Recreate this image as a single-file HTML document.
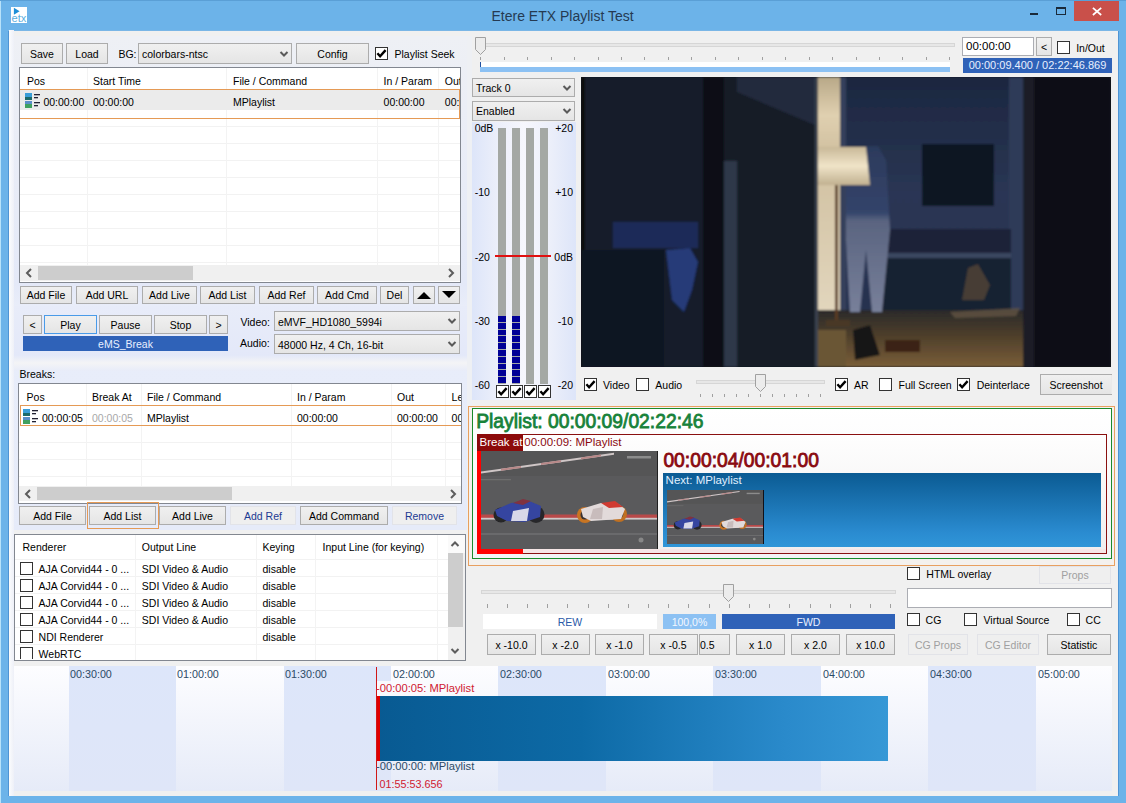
<!DOCTYPE html>
<html><head><meta charset="utf-8"><style>
html,body{margin:0;padding:0;width:1126px;height:803px;overflow:hidden;background:#6cb3e9}
body{position:relative;font-family:"Liberation Sans",sans-serif}
div,span,svg{position:absolute}
.a{position:absolute;overflow:visible}
.t{position:absolute;white-space:nowrap;font-family:"Liberation Sans",sans-serif}
.btn{border:1px solid #acacac;box-sizing:border-box;background:linear-gradient(#f0f0f0,#e5e5e5)}
.btnb{border:1px solid #4a9be8;box-sizing:border-box;background:linear-gradient(#f0f0f0,#e5e5e5)}
.flat{border:1px solid #e2e3e8;box-sizing:border-box;background:#efefef}
.chk{width:13px;height:13px;border:1px solid #333;box-sizing:border-box;background:#fff}
</style></head><body>
<div style="left:0;top:0;width:1126px;height:803px;background:#6cb3e9"></div>
<div style="left:0px;top:0px;width:1126px;height:1px;background:#5a9fd6"></div>
<div style="left:0px;top:1px;width:1px;height:802px;background:#b8e2fa"></div>
<div style="left:11px;top:7px;width:16px;height:16px;background:#fff"></div>
<svg class="a" style="left:11px;top:7px" width="16" height="16" viewBox="0 0 16 16"><path d="M2.9 0.8 L8.6 4.3 L2.9 7.8 Z" fill="#1e8fd8"/><text x="0.6" y="15" font-family="Liberation Sans" font-size="10" textLength="14.8" lengthAdjust="spacingAndGlyphs" fill="#5aaee0">etx</text></svg>
<span class="t" style="left:491.5px;top:8.95px;font-size:14px;line-height:14px;color:#253a52;font-weight:normal;">Etere ETX Playlist Test</span>
<div style="left:1030px;top:13px;width:8px;height:2px;background:#1a2a3a"></div>
<div style="left:1056px;top:7px;width:10px;height:8px;border:1px solid #1a2a3a;border-top-width:2px;box-sizing:border-box"></div>
<div style="left:1074px;top:1px;width:45px;height:20px;background:#c9504a"></div>
<svg class="a" style="left:1090px;top:5px" width="14" height="12" viewBox="0 0 14 12"><path d="M2.9 2.8 L11.2 10 M11.2 2.8 L2.9 10" stroke="#fff" stroke-width="1.7"/></svg>
<div style="left:8px;top:30px;width:1111px;height:766px;background:#4f94d4"></div>
<div style="left:9px;top:30px;width:1109px;height:766px;background:#f0f0f0"></div>
<div style="left:8px;top:30px;width:1111px;height:1px;background:#7ab6e6"></div>
<div style="left:9px;top:30px;width:5px;height:766px;background:linear-gradient(90deg,#fbfcfd,#eef0f8)"></div>
<div style="left:14px;top:36px;width:453px;height:248px;background:linear-gradient(#eef0f5,#e4e9f8)"></div>
<div style="left:14px;top:284px;width:453px;height:22px;background:linear-gradient(#e4e9f8,#e9edf9)"></div>
<div style="left:14px;top:306px;width:453px;height:56px;background:linear-gradient(#e8ecf9,#e3e8f9)"></div>
<div style="left:14px;top:362px;width:453px;height:168px;background:linear-gradient(#e8edfa,#e6ebf9)"></div>
<div style="left:14px;top:355px;width:453px;height:16px;background:linear-gradient(#e3e8f9,#f4f4f6 50%,#e8ecf9)"></div>
<div style="left:467px;top:36px;width:5px;height:370px;background:#eef0f4"></div>
<div class="btn" style="left:21px;top:43px;width:42px;height:21px;"></div>
<span class="t" style="left:21px;width:42px;text-align:center;top:48.61px;font-size:10.5px;line-height:10.5px;color:#000;font-weight:normal;">Save</span>
<div class="btn" style="left:66px;top:43px;width:42px;height:21px;"></div>
<span class="t" style="left:66px;width:42px;text-align:center;top:48.61px;font-size:10.5px;line-height:10.5px;color:#000;font-weight:normal;">Load</span>
<span class="t" style="left:118.4px;top:48.61px;font-size:10.5px;line-height:10.5px;color:#000;font-weight:normal;">BG:</span>
<div class="btn" style="left:138px;top:43px;width:154px;height:21px;"></div>
<span class="t" style="left:142px;top:48.61px;font-size:10.5px;line-height:10.5px;color:#000;font-weight:normal;">colorbars-ntsc</span>
<svg class="a" style="left:279px;top:49.5px" width="10" height="8" viewBox="0 0 10 8"><path d="M1.5 2 L5 5.5 L8.5 2" fill="none" stroke="#5a5a5a" stroke-width="2"/></svg>
<div class="btn" style="left:296px;top:43px;width:73px;height:21px;"></div>
<span class="t" style="left:296px;width:73px;text-align:center;top:48.61px;font-size:10.5px;line-height:10.5px;color:#000;font-weight:normal;">Config</span>
<div class="chk" style="left:375px;top:47px;"></div>
<svg class="a" style="left:375px;top:47px" width="13" height="13" viewBox="0 0 13 13"><path d="M2.4 6.3 L5.1 9.3 L10.6 3.1" fill="none" stroke="#000" stroke-width="2.4"/></svg>
<span class="t" style="left:394.5px;top:48.61px;font-size:10.5px;line-height:10.5px;color:#000;font-weight:normal;">Playlist Seek</span>
<div style="left:19px;top:67px;width:442px;height:216px;background:#fff;border:1px solid #828790;box-sizing:border-box"></div>
<div style="left:20px;top:109px;width:440px;height:1px;background:#f2f2f2"></div>
<div style="left:20px;top:126px;width:440px;height:1px;background:#f2f2f2"></div>
<div style="left:20px;top:143px;width:440px;height:1px;background:#f2f2f2"></div>
<div style="left:20px;top:160px;width:440px;height:1px;background:#f2f2f2"></div>
<div style="left:20px;top:177px;width:440px;height:1px;background:#f2f2f2"></div>
<div style="left:20px;top:194px;width:440px;height:1px;background:#f2f2f2"></div>
<div style="left:20px;top:211px;width:440px;height:1px;background:#f2f2f2"></div>
<div style="left:20px;top:228px;width:440px;height:1px;background:#f2f2f2"></div>
<div style="left:20px;top:245px;width:440px;height:1px;background:#f2f2f2"></div>
<div style="left:20px;top:262px;width:440px;height:1px;background:#f2f2f2"></div>
<div style="left:87px;top:68px;width:1px;height:197px;background:#f3f3f3"></div>
<div style="left:226px;top:68px;width:1px;height:197px;background:#f3f3f3"></div>
<div style="left:377px;top:68px;width:1px;height:197px;background:#f3f3f3"></div>
<div style="left:438px;top:68px;width:1px;height:197px;background:#f3f3f3"></div>
<div style="left:0;top:0;width:1126px;height:803px;clip-path:inset(68px 666px 521px 20px)">
<span class="t" style="left:27px;top:76.11px;font-size:10.5px;line-height:10.5px;color:#000;font-weight:normal;">Pos</span>
<span class="t" style="left:93px;top:76.11px;font-size:10.5px;line-height:10.5px;color:#000;font-weight:normal;">Start Time</span>
<span class="t" style="left:233px;top:76.11px;font-size:10.5px;line-height:10.5px;color:#000;font-weight:normal;">File / Command</span>
<span class="t" style="left:383.6px;top:76.11px;font-size:10.5px;line-height:10.5px;color:#000;font-weight:normal;">In / Param</span>
<span class="t" style="left:444.8px;top:76.11px;font-size:10.5px;line-height:10.5px;color:#000;font-weight:normal;">Out</span>
<div style="left:20px;top:90px;width:440px;height:20px;background:#ebebeb"></div>
<div style="left:19px;top:89px;width:441px;height:30px;border:1px solid #e59a55;box-sizing:border-box"></div>
<svg class="a" style="left:25px;top:93px" width="16" height="16" viewBox="0 0 16 16"><rect x="0" y="0" width="7" height="7" fill="#3a9ed8"/><rect x="0" y="4" width="7" height="3" fill="#1c6a6a"/><rect x="0" y="8" width="7" height="7" fill="#5a8ec8"/><rect x="0" y="11" width="7" height="4" fill="#40a060"/><rect x="9" y="1" width="6" height="1.3" fill="#223"/><rect x="9" y="4" width="4" height="1.3" fill="#223"/><rect x="9" y="9" width="6" height="1.3" fill="#223"/><rect x="9" y="12" width="4" height="1.3" fill="#223"/></svg>
<span class="t" style="left:43.4px;top:97.11px;font-size:10.5px;line-height:10.5px;color:#000;font-weight:normal;">00:00:00</span>
<span class="t" style="left:93px;top:97.11px;font-size:10.5px;line-height:10.5px;color:#000;font-weight:normal;">00:00:00</span>
<span class="t" style="left:233px;top:97.11px;font-size:10.5px;line-height:10.5px;color:#000;font-weight:normal;">MPlaylist</span>
<span class="t" style="left:383.6px;top:97.11px;font-size:10.5px;line-height:10.5px;color:#000;font-weight:normal;">00:00:00</span>
<span class="t" style="left:444.8px;top:97.11px;font-size:10.5px;line-height:10.5px;color:#000;font-weight:normal;">00:</span>
</div>
<div style="left:20px;top:265px;width:440px;height:16px;background:#f0f0f0"></div>
<div style="left:38px;top:266px;width:155px;height:14px;background:#cdcdcd"></div>
<svg class="a" style="left:25px;top:268px" width="8" height="10" viewBox="0 0 8 10"><path d="M6 1 L2 5 L6 9" fill="none" stroke="#5d5d5d" stroke-width="2"/></svg>
<svg class="a" style="left:447px;top:268px" width="8" height="10" viewBox="0 0 8 10"><path d="M2 1 L6 5 L2 9" fill="none" stroke="#5d5d5d" stroke-width="2"/></svg>
<div class="btn" style="left:20px;top:286px;width:52px;height:18px;"></div>
<span class="t" style="left:20px;width:52px;text-align:center;top:290.11px;font-size:10.5px;line-height:10.5px;color:#000;font-weight:normal;">Add File</span>
<div class="btn" style="left:76px;top:286px;width:62px;height:18px;"></div>
<span class="t" style="left:76px;width:62px;text-align:center;top:290.11px;font-size:10.5px;line-height:10.5px;color:#000;font-weight:normal;">Add URL</span>
<div class="btn" style="left:142px;top:286px;width:55px;height:18px;"></div>
<span class="t" style="left:142px;width:55px;text-align:center;top:290.11px;font-size:10.5px;line-height:10.5px;color:#000;font-weight:normal;">Add Live</span>
<div class="btn" style="left:200px;top:286px;width:55px;height:18px;"></div>
<span class="t" style="left:200px;width:55px;text-align:center;top:290.11px;font-size:10.5px;line-height:10.5px;color:#000;font-weight:normal;">Add List</span>
<div class="btn" style="left:259px;top:286px;width:55px;height:18px;"></div>
<span class="t" style="left:259px;width:55px;text-align:center;top:290.11px;font-size:10.5px;line-height:10.5px;color:#000;font-weight:normal;">Add Ref</span>
<div class="btn" style="left:317px;top:286px;width:60px;height:18px;"></div>
<span class="t" style="left:317px;width:60px;text-align:center;top:290.11px;font-size:10.5px;line-height:10.5px;color:#000;font-weight:normal;">Add Cmd</span>
<div class="btn" style="left:380px;top:286px;width:29px;height:18px;"></div>
<span class="t" style="left:380px;width:29px;text-align:center;top:290.11px;font-size:10.5px;line-height:10.5px;color:#000;font-weight:normal;">Del</span>
<div class="btn" style="left:413px;top:286px;width:22px;height:18px;"></div>
<span class="t" style="left:413px;width:22px;text-align:center;top:290.11px;font-size:10.5px;line-height:10.5px;color:#000;font-weight:normal;"></span>
<div class="btn" style="left:438px;top:286px;width:22px;height:18px;"></div>
<span class="t" style="left:438px;width:22px;text-align:center;top:290.11px;font-size:10.5px;line-height:10.5px;color:#000;font-weight:normal;"></span>
<svg class="a" style="left:416px;top:290px" width="16" height="10" viewBox="0 0 16 10"><path d="M1 9 L8 2 L15 9 Z" fill="#000"/></svg>
<svg class="a" style="left:441px;top:290px" width="16" height="10" viewBox="0 0 16 10"><path d="M1 1 L8 8 L15 1 Z" fill="#000"/></svg>
<div class="btn" style="left:23px;top:315px;width:19px;height:19px;"></div>
<span class="t" style="left:23px;width:19px;text-align:center;top:320.11px;font-size:10.5px;line-height:10.5px;color:#000;font-weight:normal;">&lt;</span>
<div class="btnb" style="left:44px;top:315px;width:53px;height:19px;"></div>
<span class="t" style="left:44px;width:53px;text-align:center;top:320.11px;font-size:10.5px;line-height:10.5px;color:#000;font-weight:normal;">Play</span>
<div class="btn" style="left:99px;top:315px;width:53px;height:19px;"></div>
<span class="t" style="left:99px;width:53px;text-align:center;top:320.11px;font-size:10.5px;line-height:10.5px;color:#000;font-weight:normal;">Pause</span>
<div class="btn" style="left:154px;top:315px;width:53px;height:19px;"></div>
<span class="t" style="left:154px;width:53px;text-align:center;top:320.11px;font-size:10.5px;line-height:10.5px;color:#000;font-weight:normal;">Stop</span>
<div class="btn" style="left:209px;top:315px;width:19px;height:19px;"></div>
<span class="t" style="left:209px;width:19px;text-align:center;top:320.11px;font-size:10.5px;line-height:10.5px;color:#000;font-weight:normal;">&gt;</span>
<div style="left:23px;top:336px;width:205px;height:15px;background:#2f62b8"></div>
<span class="t" style="left:23px;width:205px;text-align:center;top:338.61px;font-size:10.5px;line-height:10.5px;color:#e8f0ff;font-weight:normal;">eMS_Break</span>
<span class="t" style="left:240.4px;top:317.11px;font-size:10.5px;line-height:10.5px;color:#000;font-weight:normal;">Video:</span>
<div class="btn" style="left:274px;top:311px;width:186px;height:20px;"></div>
<span class="t" style="left:278px;top:317.11px;font-size:10.5px;line-height:10.5px;color:#000;font-weight:normal;">eMVF_HD1080_5994i</span>
<svg class="a" style="left:447px;top:317.0px" width="10" height="8" viewBox="0 0 10 8"><path d="M1.5 2 L5 5.5 L8.5 2" fill="none" stroke="#5a5a5a" stroke-width="2"/></svg>
<span class="t" style="left:240px;top:338.11px;font-size:10.5px;line-height:10.5px;color:#000;font-weight:normal;">Audio:</span>
<div class="btn" style="left:274px;top:334px;width:186px;height:20px;"></div>
<span class="t" style="left:278px;top:340.11px;font-size:10.5px;line-height:10.5px;color:#000;font-weight:normal;">48000 Hz, 4 Ch, 16-bit</span>
<svg class="a" style="left:447px;top:340.0px" width="10" height="8" viewBox="0 0 10 8"><path d="M1.5 2 L5 5.5 L8.5 2" fill="none" stroke="#5a5a5a" stroke-width="2"/></svg>
<span class="t" style="left:19.5px;top:368.71px;font-size:10.5px;line-height:10.5px;color:#000;font-weight:normal;">Breaks:</span>
<div style="left:18px;top:383px;width:444px;height:121px;background:#fff;border:1px solid #828790;box-sizing:border-box"></div>
<div style="left:19px;top:442px;width:442px;height:1px;background:#f2f2f2"></div>
<div style="left:19px;top:459px;width:442px;height:1px;background:#f2f2f2"></div>
<div style="left:19px;top:476px;width:442px;height:1px;background:#f2f2f2"></div>
<div style="left:86px;top:384px;width:1px;height:102px;background:#f3f3f3"></div>
<div style="left:141px;top:384px;width:1px;height:102px;background:#f3f3f3"></div>
<div style="left:291px;top:384px;width:1px;height:102px;background:#f3f3f3"></div>
<div style="left:391px;top:384px;width:1px;height:102px;background:#f3f3f3"></div>
<div style="left:445px;top:384px;width:1px;height:102px;background:#f3f3f3"></div>
<div style="left:0;top:0;width:1126px;height:803px;clip-path:inset(384px 665px 300px 19px)">
<span class="t" style="left:26.6px;top:391.71px;font-size:10.5px;line-height:10.5px;color:#000;font-weight:normal;">Pos</span>
<span class="t" style="left:92px;top:391.71px;font-size:10.5px;line-height:10.5px;color:#000;font-weight:normal;">Break At</span>
<span class="t" style="left:147px;top:391.71px;font-size:10.5px;line-height:10.5px;color:#000;font-weight:normal;">File / Command</span>
<span class="t" style="left:297px;top:391.71px;font-size:10.5px;line-height:10.5px;color:#000;font-weight:normal;">In / Param</span>
<span class="t" style="left:397px;top:391.71px;font-size:10.5px;line-height:10.5px;color:#000;font-weight:normal;">Out</span>
<span class="t" style="left:451.6px;top:391.71px;font-size:10.5px;line-height:10.5px;color:#000;font-weight:normal;">Le</span>
<div style="left:20px;top:405px;width:442px;height:21px;border:1px solid #e59a55;box-sizing:border-box"></div>
<svg class="a" style="left:23px;top:409px" width="16" height="16" viewBox="0 0 16 16"><rect x="0" y="0" width="7" height="7" fill="#3a9ed8"/><rect x="0" y="4" width="7" height="3" fill="#1c6a6a"/><rect x="0" y="8" width="7" height="7" fill="#5a8ec8"/><rect x="0" y="11" width="7" height="4" fill="#40a060"/><rect x="9" y="1" width="6" height="1.3" fill="#223"/><rect x="9" y="4" width="4" height="1.3" fill="#223"/><rect x="9" y="9" width="6" height="1.3" fill="#223"/><rect x="9" y="12" width="4" height="1.3" fill="#223"/></svg>
<span class="t" style="left:42px;top:412.81px;font-size:10.5px;line-height:10.5px;color:#000;font-weight:normal;">00:00:05</span>
<span class="t" style="left:92px;top:412.81px;font-size:10.5px;line-height:10.5px;color:#a8a8a8;font-weight:normal;">00:00:05</span>
<span class="t" style="left:147px;top:412.81px;font-size:10.5px;line-height:10.5px;color:#000;font-weight:normal;">MPlaylist</span>
<span class="t" style="left:297px;top:412.81px;font-size:10.5px;line-height:10.5px;color:#000;font-weight:normal;">00:00:00</span>
<span class="t" style="left:397px;top:412.81px;font-size:10.5px;line-height:10.5px;color:#000;font-weight:normal;">00:00:00</span>
<span class="t" style="left:451.6px;top:412.81px;font-size:10.5px;line-height:10.5px;color:#000;font-weight:normal;">00</span>
</div>
<div style="left:19px;top:486px;width:442px;height:15px;background:#f0f0f0"></div>
<div style="left:37px;top:487px;width:195px;height:13px;background:#cdcdcd"></div>
<svg class="a" style="left:24px;top:489px" width="8" height="10" viewBox="0 0 8 10"><path d="M6 1 L2 5 L6 9" fill="none" stroke="#5d5d5d" stroke-width="2"/></svg>
<svg class="a" style="left:449px;top:489px" width="8" height="10" viewBox="0 0 8 10"><path d="M2 1 L6 5 L2 9" fill="none" stroke="#5d5d5d" stroke-width="2"/></svg>
<div class="btn" style="left:19px;top:506px;width:67px;height:19px;"></div>
<span class="t" style="left:19px;width:67px;text-align:center;top:510.61px;font-size:10.5px;line-height:10.5px;color:#000;font-weight:normal;">Add File</span>
<div style="left:87px;top:502px;width:72px;height:27px;border:1px solid #e59a55;box-sizing:border-box"></div>
<div class="btn" style="left:89px;top:506px;width:67px;height:19px;"></div>
<span class="t" style="left:89px;width:67px;text-align:center;top:510.61px;font-size:10.5px;line-height:10.5px;color:#000;font-weight:normal;">Add List</span>
<div class="btn" style="left:159px;top:506px;width:67px;height:19px;"></div>
<span class="t" style="left:159px;width:67px;text-align:center;top:510.61px;font-size:10.5px;line-height:10.5px;color:#000;font-weight:normal;">Add Live</span>
<div class="flat" style="left:230px;top:506px;width:66px;height:19px"></div>
<span class="t" style="left:230px;width:66px;text-align:center;top:510.61px;font-size:10.5px;line-height:10.5px;color:#1c3a92;font-weight:normal;">Add Ref</span>
<div class="btn" style="left:300px;top:506px;width:88px;height:19px;"></div>
<span class="t" style="left:300px;width:88px;text-align:center;top:510.61px;font-size:10.5px;line-height:10.5px;color:#000;font-weight:normal;">Add Command</span>
<div class="flat" style="left:392px;top:506px;width:65px;height:19px"></div>
<span class="t" style="left:392px;width:65px;text-align:center;top:510.61px;font-size:10.5px;line-height:10.5px;color:#1c3a92;font-weight:normal;">Remove</span>
<div style="left:14px;top:534px;width:452px;height:127px;background:#fff;border:1px solid #828790;box-sizing:border-box"></div>
<div style="left:15px;top:559px;width:433px;height:1px;background:#f2f2f2"></div>
<div style="left:15px;top:576px;width:433px;height:1px;background:#f2f2f2"></div>
<div style="left:15px;top:593px;width:433px;height:1px;background:#f2f2f2"></div>
<div style="left:15px;top:610px;width:433px;height:1px;background:#f2f2f2"></div>
<div style="left:15px;top:627px;width:433px;height:1px;background:#f2f2f2"></div>
<div style="left:15px;top:644px;width:433px;height:1px;background:#f2f2f2"></div>
<div style="left:135px;top:535px;width:1px;height:125px;background:#f3f3f3"></div>
<div style="left:256px;top:535px;width:1px;height:125px;background:#f3f3f3"></div>
<div style="left:315px;top:535px;width:1px;height:125px;background:#f3f3f3"></div>
<div style="left:437px;top:535px;width:1px;height:125px;background:#f3f3f3"></div>
<div style="left:0;top:0;width:1126px;height:803px;clip-path:inset(535px 678px 144px 15px)">
<span class="t" style="left:22.5px;top:542.41px;font-size:10.5px;line-height:10.5px;color:#000;font-weight:normal;">Renderer</span>
<span class="t" style="left:141.8px;top:542.41px;font-size:10.5px;line-height:10.5px;color:#000;font-weight:normal;">Output Line</span>
<span class="t" style="left:262.5px;top:542.41px;font-size:10.5px;line-height:10.5px;color:#000;font-weight:normal;">Keying</span>
<span class="t" style="left:322.6px;top:542.41px;font-size:10.5px;line-height:10.5px;color:#000;font-weight:normal;">Input Line (for keying)</span>
<div class="chk" style="left:20px;top:562px;"></div>
<span class="t" style="left:38.6px;top:563.71px;font-size:10.5px;line-height:10.5px;color:#000;font-weight:normal;">AJA Corvid44 - 0 ...</span>
<span class="t" style="left:141.8px;top:563.71px;font-size:10.5px;line-height:10.5px;color:#000;font-weight:normal;">SDI Video &amp; Audio</span>
<span class="t" style="left:262.5px;top:563.71px;font-size:10.5px;line-height:10.5px;color:#000;font-weight:normal;">disable</span>
<div class="chk" style="left:20px;top:579px;"></div>
<span class="t" style="left:38.6px;top:580.71px;font-size:10.5px;line-height:10.5px;color:#000;font-weight:normal;">AJA Corvid44 - 0 ...</span>
<span class="t" style="left:141.8px;top:580.71px;font-size:10.5px;line-height:10.5px;color:#000;font-weight:normal;">SDI Video &amp; Audio</span>
<span class="t" style="left:262.5px;top:580.71px;font-size:10.5px;line-height:10.5px;color:#000;font-weight:normal;">disable</span>
<div class="chk" style="left:20px;top:596px;"></div>
<span class="t" style="left:38.6px;top:597.71px;font-size:10.5px;line-height:10.5px;color:#000;font-weight:normal;">AJA Corvid44 - 0 ...</span>
<span class="t" style="left:141.8px;top:597.71px;font-size:10.5px;line-height:10.5px;color:#000;font-weight:normal;">SDI Video &amp; Audio</span>
<span class="t" style="left:262.5px;top:597.71px;font-size:10.5px;line-height:10.5px;color:#000;font-weight:normal;">disable</span>
<div class="chk" style="left:20px;top:613px;"></div>
<span class="t" style="left:38.6px;top:614.71px;font-size:10.5px;line-height:10.5px;color:#000;font-weight:normal;">AJA Corvid44 - 0 ...</span>
<span class="t" style="left:141.8px;top:614.71px;font-size:10.5px;line-height:10.5px;color:#000;font-weight:normal;">SDI Video &amp; Audio</span>
<span class="t" style="left:262.5px;top:614.71px;font-size:10.5px;line-height:10.5px;color:#000;font-weight:normal;">disable</span>
<div class="chk" style="left:20px;top:630px;"></div>
<span class="t" style="left:38.6px;top:631.71px;font-size:10.5px;line-height:10.5px;color:#000;font-weight:normal;">NDI Renderer</span>
<span class="t" style="left:141.8px;top:631.71px;font-size:10.5px;line-height:10.5px;color:#000;font-weight:normal;"></span>
<span class="t" style="left:262.5px;top:631.71px;font-size:10.5px;line-height:10.5px;color:#000;font-weight:normal;">disable</span>
<div class="chk" style="left:20px;top:647px;"></div>
<span class="t" style="left:38.6px;top:648.71px;font-size:10.5px;line-height:10.5px;color:#000;font-weight:normal;">WebRTC</span>
<span class="t" style="left:141.8px;top:648.71px;font-size:10.5px;line-height:10.5px;color:#000;font-weight:normal;"></span>
<span class="t" style="left:262.5px;top:648.71px;font-size:10.5px;line-height:10.5px;color:#000;font-weight:normal;"></span>
</div>
<div style="left:448px;top:535px;width:17px;height:125px;background:#f0f0f0"></div>
<div style="left:448px;top:535px;width:17px;height:18px;background:#fafafa"></div>
<div style="left:448px;top:553px;width:15px;height:74px;background:#cdcdcd"></div>
<svg class="a" style="left:450px;top:540px" width="10" height="8" viewBox="0 0 10 8"><path d="M1.5 6 L5 2.5 L8.5 6" fill="none" stroke="#5d5d5d" stroke-width="2"/></svg>
<svg class="a" style="left:450px;top:647px" width="10" height="8" viewBox="0 0 10 8"><path d="M1.5 2 L5 5.5 L8.5 2" fill="none" stroke="#5d5d5d" stroke-width="2"/></svg>
<div style="left:14px;top:666px;width:1098px;height:125px;background:linear-gradient(#f2f4fb,#e4e9f8)"></div>
<div style="left:69px;top:666px;width:107px;height:125px;background:linear-gradient(#dde6fa,#dfe6f8)"></div>
<div style="left:176px;top:666px;width:108px;height:125px;background:linear-gradient(#fdfdff,#e6ebf8)"></div>
<div style="left:284px;top:666px;width:107px;height:125px;background:linear-gradient(#dde6fa,#dfe6f8)"></div>
<div style="left:391px;top:666px;width:107px;height:125px;background:linear-gradient(#fdfdff,#e6ebf8)"></div>
<div style="left:498px;top:666px;width:108px;height:125px;background:linear-gradient(#dde6fa,#dfe6f8)"></div>
<div style="left:606px;top:666px;width:107px;height:125px;background:linear-gradient(#fdfdff,#e6ebf8)"></div>
<div style="left:713px;top:666px;width:108px;height:125px;background:linear-gradient(#dde6fa,#dfe6f8)"></div>
<div style="left:821px;top:666px;width:107px;height:125px;background:linear-gradient(#fdfdff,#e6ebf8)"></div>
<div style="left:928px;top:666px;width:108px;height:125px;background:linear-gradient(#dde6fa,#dfe6f8)"></div>
<div style="left:1036px;top:666px;width:76px;height:125px;background:linear-gradient(#fdfdff,#e6ebf8)"></div>
<div style="left:14px;top:666px;width:55px;height:125px;background:linear-gradient(#fdfdff,#e6ebf8)"></div>
<span class="t" style="left:70px;top:668.50px;font-size:10.75px;line-height:10.75px;color:#2c4a66;font-weight:normal;">00:30:00</span>
<span class="t" style="left:177px;top:668.50px;font-size:10.75px;line-height:10.75px;color:#2c4a66;font-weight:normal;">01:00:00</span>
<span class="t" style="left:285px;top:668.50px;font-size:10.75px;line-height:10.75px;color:#2c4a66;font-weight:normal;">01:30:00</span>
<span class="t" style="left:393px;top:668.50px;font-size:10.75px;line-height:10.75px;color:#2c4a66;font-weight:normal;">02:00:00</span>
<span class="t" style="left:500px;top:668.50px;font-size:10.75px;line-height:10.75px;color:#2c4a66;font-weight:normal;">02:30:00</span>
<span class="t" style="left:608px;top:668.50px;font-size:10.75px;line-height:10.75px;color:#2c4a66;font-weight:normal;">03:00:00</span>
<span class="t" style="left:715px;top:668.50px;font-size:10.75px;line-height:10.75px;color:#2c4a66;font-weight:normal;">03:30:00</span>
<span class="t" style="left:823px;top:668.50px;font-size:10.75px;line-height:10.75px;color:#2c4a66;font-weight:normal;">04:00:00</span>
<span class="t" style="left:930px;top:668.50px;font-size:10.75px;line-height:10.75px;color:#2c4a66;font-weight:normal;">04:30:00</span>
<span class="t" style="left:1038px;top:668.50px;font-size:10.75px;line-height:10.75px;color:#2c4a66;font-weight:normal;">05:00:00</span>
<div style="left:377px;top:681px;width:14px;height:15px;background:#f8f9fe"></div>
<div style="left:377px;top:696px;width:511px;height:65px;background:linear-gradient(90deg,#085a92,#0d6aa6 40%,#2a8acb 80%,#3698d6)"></div>
<div style="left:376px;top:696px;width:4px;height:65px;background:#e00000"></div>
<div style="left:376px;top:667px;width:1px;height:123px;background:#d01818"></div>
<span class="t" style="left:376px;top:682.52px;font-size:11.2px;line-height:11.2px;color:#d02030;font-weight:normal;">-00:00:05: MPlaylist</span>
<span class="t" style="left:376px;top:760.82px;font-size:11.2px;line-height:11.2px;color:#2c4a66;font-weight:normal;">-00:00:00: MPlaylist</span>
<span class="t" style="left:379.5px;top:778.86px;font-size:10.8px;line-height:10.8px;color:#d02030;font-weight:normal;">01:55:53.656</span>
<div style="left:480px;top:43px;width:475px;height:4px;background:#e7e7e7;border:1px solid #d6d6d6;box-sizing:border-box"></div>
<svg class="a" style="left:475px;top:37px" width="12" height="19" viewBox="0 0 12 19"><path d="M0.5 0.5 H10.5 V12.5 L5.5 17.5 L0.5 12.5 Z" fill="#ececec" stroke="#a0a0a0"/></svg>
<div style="left:480px;top:57px;width:1px;height:3px;background:#a0a0a0"></div>
<div style="left:504px;top:57px;width:1px;height:3px;background:#a0a0a0"></div>
<div style="left:527px;top:57px;width:1px;height:3px;background:#a0a0a0"></div>
<div style="left:551px;top:57px;width:1px;height:3px;background:#a0a0a0"></div>
<div style="left:574px;top:57px;width:1px;height:3px;background:#a0a0a0"></div>
<div style="left:598px;top:57px;width:1px;height:3px;background:#a0a0a0"></div>
<div style="left:621px;top:57px;width:1px;height:3px;background:#a0a0a0"></div>
<div style="left:644px;top:57px;width:1px;height:3px;background:#a0a0a0"></div>
<div style="left:668px;top:57px;width:1px;height:3px;background:#a0a0a0"></div>
<div style="left:691px;top:57px;width:1px;height:3px;background:#a0a0a0"></div>
<div style="left:715px;top:57px;width:1px;height:3px;background:#a0a0a0"></div>
<div style="left:738px;top:57px;width:1px;height:3px;background:#a0a0a0"></div>
<div style="left:762px;top:57px;width:1px;height:3px;background:#a0a0a0"></div>
<div style="left:785px;top:57px;width:1px;height:3px;background:#a0a0a0"></div>
<div style="left:809px;top:57px;width:1px;height:3px;background:#a0a0a0"></div>
<div style="left:832px;top:57px;width:1px;height:3px;background:#a0a0a0"></div>
<div style="left:856px;top:57px;width:1px;height:3px;background:#a0a0a0"></div>
<div style="left:879px;top:57px;width:1px;height:3px;background:#a0a0a0"></div>
<div style="left:902px;top:57px;width:1px;height:3px;background:#a0a0a0"></div>
<div style="left:926px;top:57px;width:1px;height:3px;background:#a0a0a0"></div>
<div style="left:949px;top:57px;width:1px;height:3px;background:#a0a0a0"></div>
<div style="left:480px;top:62px;width:470px;height:5px;background:#fff"></div>
<div style="left:480px;top:67px;width:470px;height:5px;background:#8cc1f3"></div>
<div style="left:480px;top:62px;width:1px;height:5px;background:#2050a0"></div>
<div style="left:962px;top:37px;width:72px;height:19px;background:#fff;border:1px solid #abadb3;box-sizing:border-box"></div>
<span class="t" style="left:966px;top:41.27px;font-size:11.5px;line-height:11.5px;color:#000;font-weight:normal;">00:00:00</span>
<div class="btn" style="left:1036px;top:37px;width:16px;height:19px;"></div>
<span class="t" style="left:1036px;width:16px;text-align:center;top:42.11px;font-size:10.5px;line-height:10.5px;color:#000;font-weight:normal;">&lt;</span>
<div class="chk" style="left:1057px;top:41px;"></div>
<span class="t" style="left:1076.2px;top:42.61px;font-size:10.5px;line-height:10.5px;color:#000;font-weight:normal;">In/Out</span>
<div style="left:963px;top:58px;width:149px;height:15px;background:#2f62b8"></div>
<span class="t" style="left:963px;width:149px;text-align:center;top:60.19px;font-size:11px;line-height:11px;color:#e8f0ff;font-weight:normal;">00:00:09.400 / 02:22:46.869</span>
<div class="btn" style="left:472px;top:78px;width:103px;height:19px;"></div>
<span class="t" style="left:476px;top:83.11px;font-size:10.5px;line-height:10.5px;color:#000;font-weight:normal;">Track 0</span>
<svg class="a" style="left:562px;top:83.5px" width="10" height="8" viewBox="0 0 10 8"><path d="M1.5 2 L5 5.5 L8.5 2" fill="none" stroke="#5a5a5a" stroke-width="2"/></svg>
<div class="btn" style="left:472px;top:101px;width:103px;height:20px;"></div>
<span class="t" style="left:476px;top:106.11px;font-size:10.5px;line-height:10.5px;color:#000;font-weight:normal;">Enabled</span>
<svg class="a" style="left:562px;top:107.0px" width="10" height="8" viewBox="0 0 10 8"><path d="M1.5 2 L5 5.5 L8.5 2" fill="none" stroke="#5a5a5a" stroke-width="2"/></svg>
<div style="left:472px;top:122px;width:104px;height:278px;background:linear-gradient(90deg,#dde5f9,#eceffa 25%,#f6f7fd 50%,#eceffa 75%,#dde5f9)"></div>
<div style="left:498px;top:128px;width:8px;height:256px;background:#a4a8a4"></div>
<div style="left:512px;top:128px;width:8px;height:256px;background:#a4a8a4"></div>
<div style="left:526px;top:128px;width:8px;height:256px;background:#a4a8a4"></div>
<div style="left:540px;top:128px;width:8px;height:256px;background:#a4a8a4"></div>
<div style="left:498px;top:316px;width:8px;height:6px;background:#000096"></div>
<div style="left:498px;top:323px;width:8px;height:6px;background:#000096"></div>
<div style="left:498px;top:330px;width:8px;height:5px;background:#000096"></div>
<div style="left:498px;top:336px;width:8px;height:6px;background:#000096"></div>
<div style="left:498px;top:343px;width:8px;height:6px;background:#000096"></div>
<div style="left:498px;top:350px;width:8px;height:6px;background:#000096"></div>
<div style="left:498px;top:357px;width:8px;height:6px;background:#000096"></div>
<div style="left:498px;top:364px;width:8px;height:5px;background:#000096"></div>
<div style="left:498px;top:370px;width:8px;height:6px;background:#000096"></div>
<div style="left:498px;top:377px;width:8px;height:6px;background:#000096"></div>
<div style="left:512px;top:316px;width:8px;height:6px;background:#000096"></div>
<div style="left:512px;top:323px;width:8px;height:6px;background:#000096"></div>
<div style="left:512px;top:330px;width:8px;height:5px;background:#000096"></div>
<div style="left:512px;top:336px;width:8px;height:6px;background:#000096"></div>
<div style="left:512px;top:343px;width:8px;height:6px;background:#000096"></div>
<div style="left:512px;top:350px;width:8px;height:6px;background:#000096"></div>
<div style="left:512px;top:357px;width:8px;height:6px;background:#000096"></div>
<div style="left:512px;top:364px;width:8px;height:5px;background:#000096"></div>
<div style="left:512px;top:370px;width:8px;height:6px;background:#000096"></div>
<div style="left:512px;top:377px;width:8px;height:6px;background:#000096"></div>
<div style="left:495px;top:255px;width:56px;height:2px;background:#e01010"></div>
<span class="t" style="left:474.7px;top:122.61px;font-size:10.5px;line-height:10.5px;color:#000;font-weight:normal;">0dB</span>
<span class="t" style="left:474.7px;top:186.81px;font-size:10.5px;line-height:10.5px;color:#000;font-weight:normal;">-10</span>
<span class="t" style="left:474.7px;top:252.11px;font-size:10.5px;line-height:10.5px;color:#000;font-weight:normal;">-20</span>
<span class="t" style="left:474.7px;top:316.11px;font-size:10.5px;line-height:10.5px;color:#000;font-weight:normal;">-30</span>
<span class="t" style="left:474.7px;top:380.11px;font-size:10.5px;line-height:10.5px;color:#000;font-weight:normal;">-60</span>
<span class="t" style="left:520px;width:53px;text-align:right;top:122.61px;font-size:10.5px;line-height:10.5px">+20</span>
<span class="t" style="left:520px;width:53px;text-align:right;top:186.81px;font-size:10.5px;line-height:10.5px">+10</span>
<span class="t" style="left:520px;width:53px;text-align:right;top:252.11px;font-size:10.5px;line-height:10.5px">0dB</span>
<span class="t" style="left:520px;width:53px;text-align:right;top:316.11px;font-size:10.5px;line-height:10.5px">-10</span>
<span class="t" style="left:520px;width:53px;text-align:right;top:380.11px;font-size:10.5px;line-height:10.5px">-20</span>
<div class="chk" style="left:496px;top:385px;"></div>
<svg class="a" style="left:496px;top:385px" width="13" height="13" viewBox="0 0 13 13"><path d="M2.4 6.3 L5.1 9.3 L10.6 3.1" fill="none" stroke="#000" stroke-width="2.4"/></svg>
<div class="chk" style="left:510px;top:385px;"></div>
<svg class="a" style="left:510px;top:385px" width="13" height="13" viewBox="0 0 13 13"><path d="M2.4 6.3 L5.1 9.3 L10.6 3.1" fill="none" stroke="#000" stroke-width="2.4"/></svg>
<div class="chk" style="left:524px;top:385px;"></div>
<svg class="a" style="left:524px;top:385px" width="13" height="13" viewBox="0 0 13 13"><path d="M2.4 6.3 L5.1 9.3 L10.6 3.1" fill="none" stroke="#000" stroke-width="2.4"/></svg>
<div class="chk" style="left:538px;top:385px;"></div>
<svg class="a" style="left:538px;top:385px" width="13" height="13" viewBox="0 0 13 13"><path d="M2.4 6.3 L5.1 9.3 L10.6 3.1" fill="none" stroke="#000" stroke-width="2.4"/></svg>
<svg style="left:581px;top:77px;overflow:hidden" width="530" height="290" viewBox="0 0 530 290"><defs><linearGradient id="gwall" x1="0" y1="0" x2="0" y2="1"><stop offset="0" stop-color="#1c2740"/><stop offset="0.5" stop-color="#2a3654"/><stop offset="1" stop-color="#263250"/></linearGradient><linearGradient id="gstrip" x1="0" y1="0" x2="0" y2="1"><stop offset="0" stop-color="#b8a888"/><stop offset="0.15" stop-color="#e0d0b0"/><stop offset="0.3" stop-color="#d0c0a0"/><stop offset="1" stop-color="#e4d8c0"/></linearGradient><linearGradient id="gfloor" x1="0" y1="0" x2="0" y2="1"><stop offset="0" stop-color="#2a2a2c"/><stop offset="0.4" stop-color="#4a3c2a"/><stop offset="1" stop-color="#7a5e38"/></linearGradient><linearGradient id="gshade" x1="0" y1="0" x2="0" y2="1"><stop offset="0" stop-color="#c8b898"/><stop offset="0.5" stop-color="#f0e4c8"/><stop offset="1" stop-color="#c0b090"/></linearGradient><linearGradient id="gperson" x1="0" y1="0" x2="0" y2="1"><stop offset="0" stop-color="#2c3a5c"/><stop offset="0.4" stop-color="#34446a"/><stop offset="0.45" stop-color="#5a6480"/><stop offset="1" stop-color="#78809a"/></linearGradient><filter id="bl"><feGaussianBlur stdDeviation="1.3"/></filter></defs><rect width="530" height="290" fill="#0e141e"/><g filter="url(#bl)"><rect x="0" y="0" width="530" height="290" fill="#0c1018" /><rect x="1" y="0" width="121" height="290" fill="#131b2b" /><rect x="0" y="0" width="4" height="290" fill="#080a10" /><rect x="1" y="173" width="82" height="117" fill="#0f1520" /><rect x="32" y="145" width="85" height="26" fill="#1c2c58" /><polygon points="85,173 109,171 117,185 111,213 103,235 91,223" fill="#263a78" /><rect x="122" y="0" width="21" height="290" fill="#0b0f16" /><rect x="143" y="0" width="13" height="84" fill="#141c28" /><rect x="143" y="84" width="13" height="206" fill="#2e3848" /><rect x="156" y="0" width="78" height="290" fill="#161c26" /><polygon points="156,0 234,0 234,48 156,15" fill="#232c3c" /><rect x="234" y="0" width="3" height="290" fill="#3a4250" /><rect x="237" y="0" width="22" height="253" fill="url(#gstrip)" /><rect x="259" y="0" width="6" height="253" fill="#34405c" /><rect x="265" y="0" width="163" height="233" fill="url(#gwall)" /><rect x="428" y="0" width="14" height="233" fill="#2e3a58" /><rect x="442" y="0" width="11" height="290" fill="#1a1e28" /><rect x="453" y="0" width="77" height="290" fill="#0c0e12" /><rect x="341" y="67" width="72" height="62" fill="#0c1220" /><rect x="298" y="152" width="132" height="24" fill="#1c2438" /><rect x="298" y="176" width="132" height="5" fill="#3a4660" /><rect x="298" y="181" width="132" height="52" fill="#182030" /><rect x="237" y="233" width="205" height="57" fill="url(#gfloor)" /><rect x="237" y="253" width="28" height="37" fill="#6a5636" /><polygon points="268,70 297,69 305,83 309,153 301,235 291,235 285,173 279,235 269,235 265,163 265,73" fill="url(#gperson)" /><ellipse cx="864" cy="132" rx="10" ry="14" fill="#2a3656"/><polygon points="237,70 285,70 289,108 237,108" fill="url(#gshade)" /><rect x="254" y="108" width="3" height="135" fill="#5a3a20" /><rect x="245" y="243" width="24" height="6" fill="#4a3828" /><polygon points="387,191 397,187 409,208 403,223 381,223" fill="#5a4c38"  opacity="0.7"/><polygon points="369,235 439,231 435,239 374,241" fill="#6a5a44"  opacity="0.7"/><polygon points="272,253 289,248 299,278 274,283" fill="#181818" /><rect x="304" y="263" width="35" height="12" fill="#3a2018" /></g></svg>
<div class="chk" style="left:584px;top:378px;"></div>
<svg class="a" style="left:584px;top:378px" width="13" height="13" viewBox="0 0 13 13"><path d="M2.4 6.3 L5.1 9.3 L10.6 3.1" fill="none" stroke="#000" stroke-width="2.4"/></svg>
<span class="t" style="left:603px;top:380.11px;font-size:10.5px;line-height:10.5px;color:#000;font-weight:normal;">Video</span>
<div class="chk" style="left:636px;top:378px;"></div>
<span class="t" style="left:655.3px;top:380.11px;font-size:10.5px;line-height:10.5px;color:#000;font-weight:normal;">Audio</span>
<div style="left:696px;top:380px;width:129px;height:4px;background:#e7e7e7;border:1px solid #d6d6d6;box-sizing:border-box"></div>
<svg class="a" style="left:755px;top:374px" width="12" height="19" viewBox="0 0 12 19"><path d="M0.5 0.5 H10.5 V12.5 L5.5 17.5 L0.5 12.5 Z" fill="#ececec" stroke="#a0a0a0"/></svg>
<div style="left:700px;top:394px;width:1px;height:3px;background:#a0a0a0"></div>
<div style="left:712px;top:394px;width:1px;height:3px;background:#a0a0a0"></div>
<div style="left:724px;top:394px;width:1px;height:3px;background:#a0a0a0"></div>
<div style="left:736px;top:394px;width:1px;height:3px;background:#a0a0a0"></div>
<div style="left:748px;top:394px;width:1px;height:3px;background:#a0a0a0"></div>
<div style="left:760px;top:394px;width:1px;height:3px;background:#a0a0a0"></div>
<div style="left:772px;top:394px;width:1px;height:3px;background:#a0a0a0"></div>
<div style="left:784px;top:394px;width:1px;height:3px;background:#a0a0a0"></div>
<div style="left:796px;top:394px;width:1px;height:3px;background:#a0a0a0"></div>
<div style="left:808px;top:394px;width:1px;height:3px;background:#a0a0a0"></div>
<div style="left:820px;top:394px;width:1px;height:3px;background:#a0a0a0"></div>
<div class="chk" style="left:835px;top:378px;"></div>
<svg class="a" style="left:835px;top:378px" width="13" height="13" viewBox="0 0 13 13"><path d="M2.4 6.3 L5.1 9.3 L10.6 3.1" fill="none" stroke="#000" stroke-width="2.4"/></svg>
<span class="t" style="left:853.9px;top:380.11px;font-size:10.5px;line-height:10.5px;color:#000;font-weight:normal;">AR</span>
<div class="chk" style="left:879px;top:378px;"></div>
<span class="t" style="left:898.5px;top:380.11px;font-size:10.5px;line-height:10.5px;color:#000;font-weight:normal;">Full Screen</span>
<div class="chk" style="left:957px;top:378px;"></div>
<svg class="a" style="left:957px;top:378px" width="13" height="13" viewBox="0 0 13 13"><path d="M2.4 6.3 L5.1 9.3 L10.6 3.1" fill="none" stroke="#000" stroke-width="2.4"/></svg>
<span class="t" style="left:976.7px;top:380.11px;font-size:10.5px;line-height:10.5px;color:#000;font-weight:normal;">Deinterlace</span>
<div class="btn" style="left:1040px;top:374px;width:72px;height:21px;"></div>
<span class="t" style="left:1040px;width:72px;text-align:center;top:379.61px;font-size:10.5px;line-height:10.5px;color:#000;font-weight:normal;">Screenshot</span>
<div style="left:1111px;top:375px;width:1px;height:19px;background:#eaeaea"></div>
<div style="left:468px;top:406px;width:647px;height:160px;border:1px solid #e8a060;box-sizing:border-box;background:#f4f1ee"></div>
<div style="left:472px;top:408px;width:640px;height:151px;border:1px solid #1a8a2a;box-sizing:border-box;background:linear-gradient(#ffffff,#f3f3f5)"></div>
<span class="t" style="left:476.2px;top:412.06px;font-size:19.3px;line-height:19.3px;color:#17823a;font-weight:normal;-webkit-text-stroke:0.8px #17823a">Playlist: 00:00:09/02:22:46</span>
<div style="left:477px;top:434px;width:630px;height:120px;border:1px solid #8a1010;box-sizing:border-box;background:linear-gradient(#fefefe,#f0eeee)"></div>
<div style="left:477px;top:434px;width:46px;height:17px;background:#8c0a0a"></div>
<span class="t" style="left:479.5px;top:437.07px;font-size:11.5px;line-height:11.5px;color:#fff;font-weight:normal;">Break at</span>
<span class="t" style="left:524.3px;top:437.07px;font-size:11.5px;line-height:11.5px;color:#8a0a10;font-weight:normal;">00:00:09: MPlaylist</span>
<div style="left:477px;top:451px;width:4px;height:103px;background:#f00"></div>
<div style="left:477px;top:549px;width:46px;height:5px;background:#f00"></div>
<div style="left:523px;top:549px;width:583px;height:4px;background:#f6e6e6"></div>
<svg class="a" style="left:481px;top:451px" width="176" height="98" viewBox="0 0 176 98" preserveAspectRatio="none"><defs><filter id="bt"><feGaussianBlur stdDeviation="0.6"/></filter></defs><g filter="url(#bt)"><rect width="176" height="98" fill="#5a5a5c"/><rect y="0" width="176" height="25" fill="#555557"/><polygon points="0,20.5 133,1.8 133,3.8 0,22.6" fill="#cfc6c6"/><polygon points="20,17.7 40,14.9 40,16.9 20,19.7" fill="#b88888"/><polygon points="60,12.1 80,9.3 80,11.3 60,14.1" fill="#b88888"/><polygon points="100,6.5 120,3.6 120,5.6 100,8.5" fill="#b88888"/><rect x="0" y="28" width="30" height="1.2" fill="#6e6e6e"/><rect x="0" y="63.5" width="176" height="4" fill="#b84a4a"/><rect x="0" y="66.8" width="176" height="1.8" fill="#d0c8c8"/><rect x="0" y="82.5" width="176" height="1" fill="#7c7c7c"/><circle cx="20" cy="64" r="7.5" fill="#252527"/><circle cx="55" cy="63.5" r="8.5" fill="#28282a"/><polygon points="14,59 30,52 48,50 60,55 59,66 44,71 26,70 16,65" fill="#3444a0"/><polygon points="32,60 48,57 46,70 30,70" fill="#d8d8e8"/><polygon points="32,52 42,48 50,50 42,54" fill="#803040"/><circle cx="104" cy="64" r="8" fill="#c87424"/><circle cx="104" cy="64" r="4.5" fill="#383030"/><circle cx="138" cy="63" r="8" fill="#c07020"/><circle cx="138" cy="63" r="4.3" fill="#383030"/><polygon points="100,58 120,52 136,52 144,58 140,68 110,70 102,66" fill="#e2dada"/><polygon points="120,52 134,50 142,56 128,57" fill="#d03a30"/><polygon points="112,58 122,56 121,68 109,68" fill="#c8bcbc"/><rect x="146" y="5" width="24" height="2.5" fill="#8c8c8c"/><circle cx="160" cy="89" r="2.5" fill="#888"/></g></svg>
<div style="left:657px;top:451px;width:1px;height:98px;background:#202020"></div>
<span class="t" style="left:663.4px;top:450.86px;font-size:19.3px;line-height:19.3px;color:#8a0a10;font-weight:normal;-webkit-text-stroke:0.8px #8a0a10">00:00:04/00:01:00</span>
<div style="left:663px;top:473px;width:438px;height:74px;background:linear-gradient(#0b5b93,#2a8bd0 80%,#3096d8)"></div>
<span class="t" style="left:665.6px;top:474.87px;font-size:11.5px;line-height:11.5px;color:#e0f0ff;font-weight:normal;">Next: MPlaylist</span>
<svg class="a" style="left:667px;top:490px" width="96" height="54" viewBox="0 0 176 98" preserveAspectRatio="none"><g filter="url(#bt)"><rect width="176" height="98" fill="#5a5a5c"/><rect y="0" width="176" height="25" fill="#555557"/><polygon points="0,20.5 133,1.8 133,3.8 0,22.6" fill="#cfc6c6"/><polygon points="20,17.7 40,14.9 40,16.9 20,19.7" fill="#b88888"/><polygon points="60,12.1 80,9.3 80,11.3 60,14.1" fill="#b88888"/><polygon points="100,6.5 120,3.6 120,5.6 100,8.5" fill="#b88888"/><rect x="0" y="28" width="30" height="1.2" fill="#6e6e6e"/><rect x="0" y="63.5" width="176" height="4" fill="#b84a4a"/><rect x="0" y="66.8" width="176" height="1.8" fill="#d0c8c8"/><rect x="0" y="82.5" width="176" height="1" fill="#7c7c7c"/><circle cx="20" cy="64" r="7.5" fill="#252527"/><circle cx="55" cy="63.5" r="8.5" fill="#28282a"/><polygon points="14,59 30,52 48,50 60,55 59,66 44,71 26,70 16,65" fill="#3444a0"/><polygon points="32,60 48,57 46,70 30,70" fill="#d8d8e8"/><polygon points="32,52 42,48 50,50 42,54" fill="#803040"/><circle cx="104" cy="64" r="8" fill="#c87424"/><circle cx="104" cy="64" r="4.5" fill="#383030"/><circle cx="138" cy="63" r="8" fill="#c07020"/><circle cx="138" cy="63" r="4.3" fill="#383030"/><polygon points="100,58 120,52 136,52 144,58 140,68 110,70 102,66" fill="#e2dada"/><polygon points="120,52 134,50 142,56 128,57" fill="#d03a30"/><polygon points="112,58 122,56 121,68 109,68" fill="#c8bcbc"/><rect x="146" y="5" width="24" height="2.5" fill="#8c8c8c"/><circle cx="160" cy="89" r="2.5" fill="#888"/></g></svg>
<div style="left:763px;top:490px;width:1px;height:54px;background:#101018"></div>
<div style="left:481px;top:590px;width:415px;height:4px;background:#e7e7e7;border:1px solid #d6d6d6;box-sizing:border-box"></div>
<svg class="a" style="left:723px;top:584px" width="12" height="19" viewBox="0 0 12 19"><path d="M0.5 0.5 H10.5 V12.5 L5.5 17.5 L0.5 12.5 Z" fill="#ececec" stroke="#a0a0a0"/></svg>
<div style="left:487px;top:604px;width:1px;height:4px;background:#a0a0a0"></div>
<div style="left:507px;top:604px;width:1px;height:4px;background:#a0a0a0"></div>
<div style="left:527px;top:604px;width:1px;height:4px;background:#a0a0a0"></div>
<div style="left:547px;top:604px;width:1px;height:4px;background:#a0a0a0"></div>
<div style="left:567px;top:604px;width:1px;height:4px;background:#a0a0a0"></div>
<div style="left:588px;top:604px;width:1px;height:4px;background:#a0a0a0"></div>
<div style="left:608px;top:604px;width:1px;height:4px;background:#a0a0a0"></div>
<div style="left:628px;top:604px;width:1px;height:4px;background:#a0a0a0"></div>
<div style="left:648px;top:604px;width:1px;height:4px;background:#a0a0a0"></div>
<div style="left:668px;top:604px;width:1px;height:4px;background:#a0a0a0"></div>
<div style="left:688px;top:604px;width:1px;height:4px;background:#a0a0a0"></div>
<div style="left:709px;top:604px;width:1px;height:4px;background:#a0a0a0"></div>
<div style="left:729px;top:604px;width:1px;height:4px;background:#a0a0a0"></div>
<div style="left:749px;top:604px;width:1px;height:4px;background:#a0a0a0"></div>
<div style="left:769px;top:604px;width:1px;height:4px;background:#a0a0a0"></div>
<div style="left:789px;top:604px;width:1px;height:4px;background:#a0a0a0"></div>
<div style="left:810px;top:604px;width:1px;height:4px;background:#a0a0a0"></div>
<div style="left:830px;top:604px;width:1px;height:4px;background:#a0a0a0"></div>
<div style="left:850px;top:604px;width:1px;height:4px;background:#a0a0a0"></div>
<div style="left:870px;top:604px;width:1px;height:4px;background:#a0a0a0"></div>
<div style="left:890px;top:604px;width:1px;height:4px;background:#a0a0a0"></div>
<div style="left:483px;top:614px;width:174px;height:15px;background:#fff"></div>
<span class="t" style="left:483px;width:174px;text-align:center;top:616.61px;font-size:10.5px;line-height:10.5px;color:#2a5aa8;font-weight:normal;">REW</span>
<div style="left:663px;top:614px;width:53px;height:15px;background:#8cc1f3"></div>
<span class="t" style="left:663px;width:53px;text-align:center;top:616.61px;font-size:10.5px;line-height:10.5px;color:#f4f8ff;font-weight:normal;">100,0%</span>
<div style="left:722px;top:614px;width:173px;height:15px;background:#2f62b8"></div>
<span class="t" style="left:722px;width:173px;text-align:center;top:616.61px;font-size:10.5px;line-height:10.5px;color:#e8f0ff;font-weight:normal;">FWD</span>
<div class="btn" style="left:487px;top:634px;width:49px;height:21px;"></div>
<span class="t" style="left:487px;width:49px;text-align:center;top:640.11px;font-size:10.5px;line-height:10.5px;color:#000;font-weight:normal;">x -10.0</span>
<div class="btn" style="left:541px;top:634px;width:49px;height:21px;"></div>
<span class="t" style="left:541px;width:49px;text-align:center;top:640.11px;font-size:10.5px;line-height:10.5px;color:#000;font-weight:normal;">x -2.0</span>
<div class="btn" style="left:595px;top:634px;width:49px;height:21px;"></div>
<span class="t" style="left:595px;width:49px;text-align:center;top:640.11px;font-size:10.5px;line-height:10.5px;color:#000;font-weight:normal;">x -1.0</span>
<div class="btn" style="left:649px;top:634px;width:49px;height:21px;"></div>
<span class="t" style="left:649px;width:49px;text-align:center;top:640.11px;font-size:10.5px;line-height:10.5px;color:#000;font-weight:normal;">x -0.5</span>
<div class="btn" style="left:791px;top:634px;width:49px;height:21px;"></div>
<span class="t" style="left:791px;width:49px;text-align:center;top:640.11px;font-size:10.5px;line-height:10.5px;color:#000;font-weight:normal;">x 2.0</span>
<div class="btn" style="left:846px;top:634px;width:49px;height:21px;"></div>
<span class="t" style="left:846px;width:49px;text-align:center;top:640.11px;font-size:10.5px;line-height:10.5px;color:#000;font-weight:normal;">x 10.0</span>
<div class="btn" style="left:736px;top:634px;width:49px;height:21px;"></div>
<span class="t" style="left:736px;width:49px;text-align:center;top:640.11px;font-size:10.5px;line-height:10.5px;color:#000;font-weight:normal;">x 1.0</span>
<div class="btn" style="left:699px;top:634px;width:31px;height:21px;"></div>
<span class="t" style="left:699px;width:31px;text-align:center;top:640.11px;font-size:10.5px;line-height:10.5px;color:#000;font-weight:normal;"></span>
<span class="t" style="left:700px;top:640.11px;font-size:10.5px;line-height:10.5px;color:#000;font-weight:normal;">0.5</span>
<div class="chk" style="left:907px;top:567px;"></div>
<span class="t" style="left:926.3px;top:568.61px;font-size:10.5px;line-height:10.5px;color:#000;font-weight:normal;">HTML overlay</span>
<div class="flat" style="left:1039px;top:566px;width:72px;height:18px"></div>
<span class="t" style="left:1039px;width:72px;text-align:center;top:569.61px;font-size:10.5px;line-height:10.5px;color:#a0a0a0;font-weight:normal;">Props</span>
<div style="left:907px;top:588px;width:205px;height:20px;background:#fff;border:1px solid #abadb3;box-sizing:border-box"></div>
<div class="chk" style="left:907px;top:613px;"></div>
<span class="t" style="left:925.6px;top:614.61px;font-size:10.5px;line-height:10.5px;color:#000;font-weight:normal;">CG</span>
<div class="chk" style="left:964px;top:613px;"></div>
<span class="t" style="left:983.5px;top:614.61px;font-size:10.5px;line-height:10.5px;color:#000;font-weight:normal;">Virtual Source</span>
<div class="chk" style="left:1067px;top:613px;"></div>
<span class="t" style="left:1085.6px;top:614.61px;font-size:10.5px;line-height:10.5px;color:#000;font-weight:normal;">CC</span>
<div class="flat" style="left:908px;top:634px;width:60px;height:21px"></div>
<span class="t" style="left:908px;width:60px;text-align:center;top:640.11px;font-size:10.5px;line-height:10.5px;color:#a0a0a0;font-weight:normal;">CG Props</span>
<div class="flat" style="left:977px;top:634px;width:62px;height:21px"></div>
<span class="t" style="left:977px;width:62px;text-align:center;top:640.11px;font-size:10.5px;line-height:10.5px;color:#a0a0a0;font-weight:normal;">CG Editor</span>
<div class="btn" style="left:1047px;top:634px;width:64px;height:21px;"></div>
<span class="t" style="left:1047px;width:64px;text-align:center;top:640.11px;font-size:10.5px;line-height:10.5px;color:#000;font-weight:normal;">Statistic</span>
</body></html>
